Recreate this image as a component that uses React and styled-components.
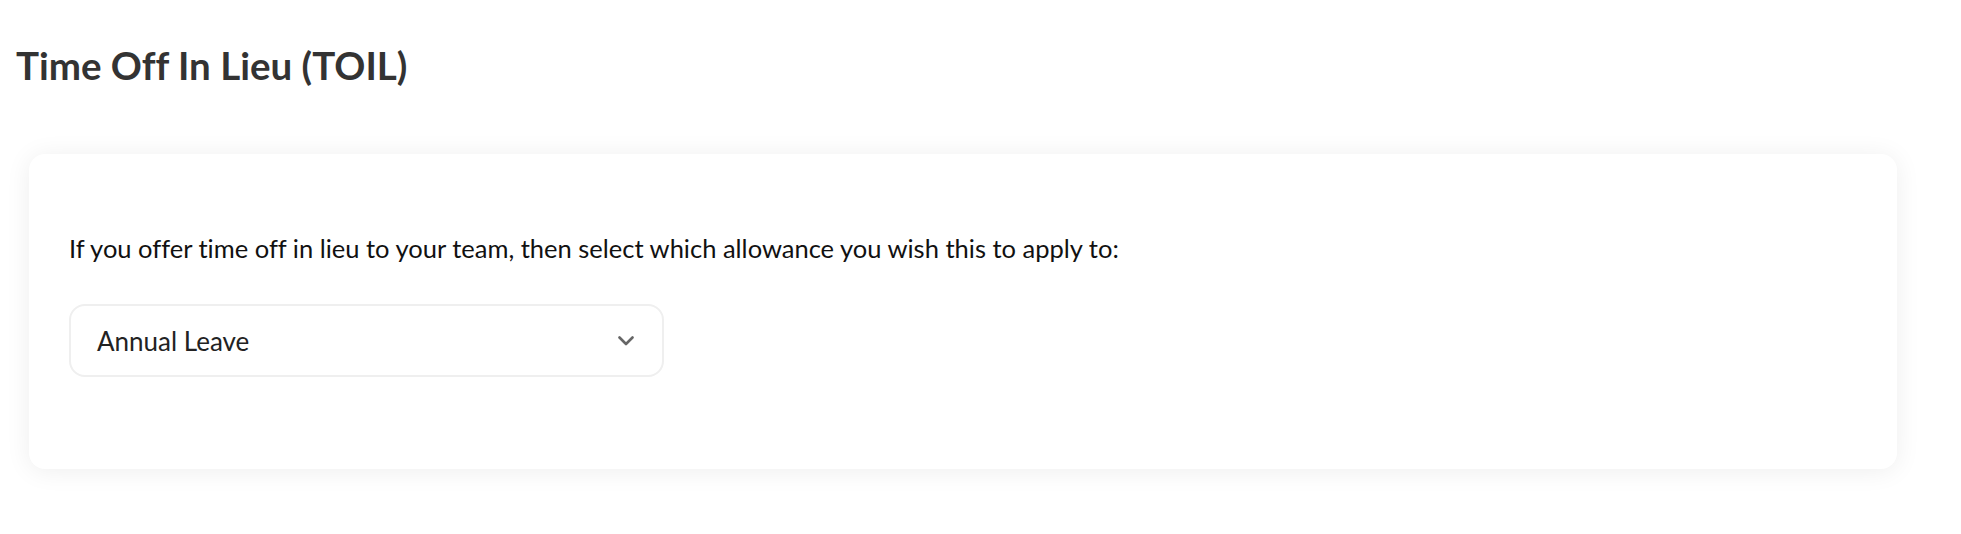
import React from "react";
import styled, { createGlobalStyle } from "styled-components";

const Global = createGlobalStyle`
  html, body { margin: 0; padding: 0; background: #ffffff; }
  body {
    font-family: Lato, "Open Sans", sans-serif;
    font-variant-ligatures: none;
    font-feature-settings: "liga" 0, "clig" 0;
  }
`;

const Page = styled.div`
  padding: 41px 64px 64px 29px;
  box-sizing: border-box;
  width: 1961px;
  min-height: 534px;
`;

const Title = styled.h1`
  margin: 0 0 65px -13px;
  font-family: Lato, sans-serif;
  font-weight: 700;
  font-size: 38.5px;
  line-height: 48px;
  color: #333333;
`;

const Card = styled.section`
  background: #ffffff;
  border-radius: 16px;
  box-shadow: 0 2px 26px rgba(0, 0, 0, 0.07);
  padding: 79px 40px 92px 40px;
`;

const Prompt = styled.p`
  margin: 0 0 41px 0;
  font-family: Lato, sans-serif;
  font-size: 25.5px;
  line-height: 30px;
  color: #111111;
`;

const Select = styled.div`
  width: 595px;
  height: 73px;
  box-sizing: border-box;
  border: 2px solid #efefef;
  border-radius: 16px;
  display: flex;
  align-items: center;
  justify-content: space-between;
  padding: 0 28px 0 26px;
  font-family: Lato, sans-serif;
  font-size: 26px;
  color: #222222;
`;

const Chevron = () => (
  <svg width="16" height="10" viewBox="0 0 16 10" fill="none">
    <path d="M1.5 1.5 L8 8 L14.5 1.5" stroke="#666666" strokeWidth="2.6" strokeLinecap="round" strokeLinejoin="round" />
  </svg>
);

export default function App() {
  return (
    <>
      <Global />
      <Page>
        <Title>Time Off In Lieu (TOIL)</Title>
        <Card>
          <Prompt>If you offer time off in lieu to your team, then select which allowance you wish this to apply to:</Prompt>
          <Select>
            <span>Annual Leave</span>
            <Chevron />
          </Select>
        </Card>
      </Page>
    </>
  );
}
